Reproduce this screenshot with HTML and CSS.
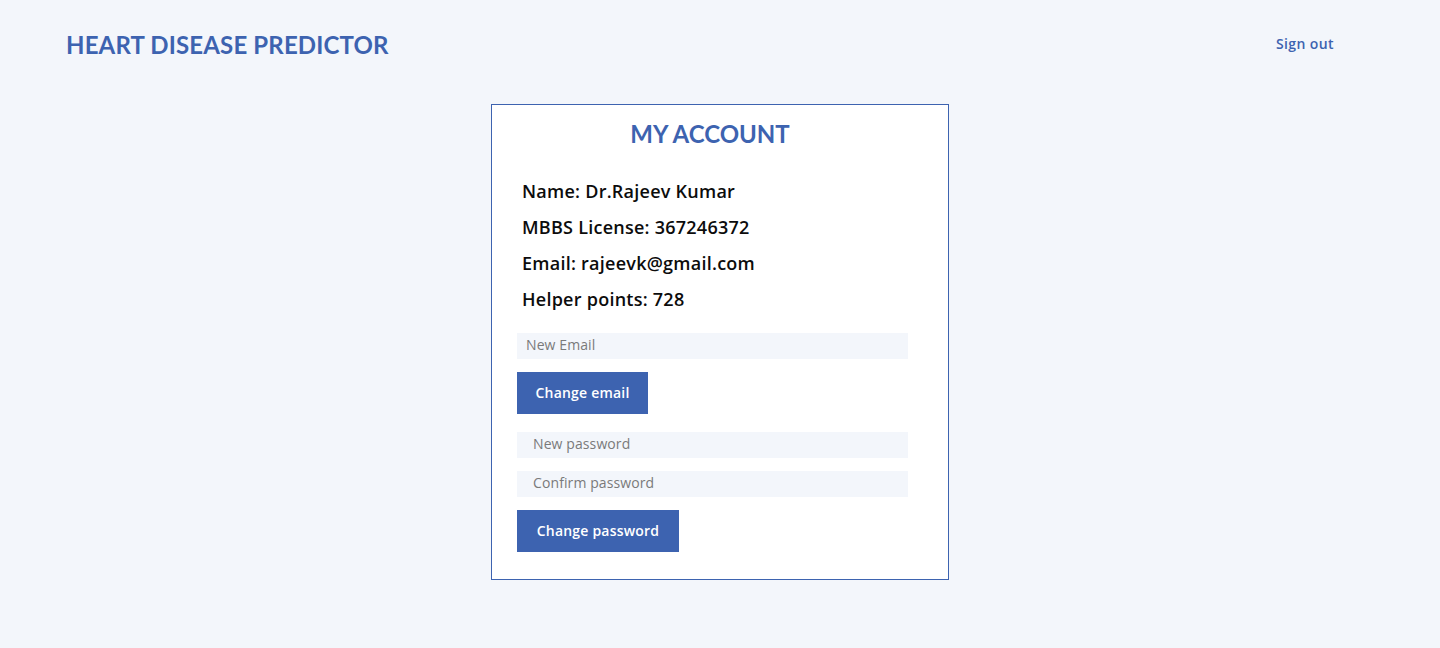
FILE: index.html
```html
<!DOCTYPE html>
<html>
<head>
<meta charset="utf-8">
<link rel="stylesheet" href="styles.css">
</head>
<body>
<header class="topbar">
  <div class="brand">HEART DISEASE PREDICTOR</div>
  <a class="signout" href="#">Sign out</a>
</header>
<main class="main">
  <section class="card">
    <h1 class="card-title">MY ACCOUNT</h1>
    <div class="info">
      <p>Name: Dr.Rajeev Kumar</p>
      <p>MBBS License: 367246372</p>
      <p>Email: rajeevk@gmail.com</p>
      <p>Helper points: 728</p>
    </div>
    <form class="form">
      <input class="field field-email" type="text" placeholder="New Email">
      <button class="btn btn-email" type="button">Change email</button>
      <input class="field field-pw" type="password" placeholder="New password">
      <input class="field field-pw field-confirm" type="password" placeholder="Confirm password">
      <button class="btn btn-pw" type="button">Change password</button>
    </form>
  </section>
</main>
</body>
</html>
```
FILE: styles.css
```css
* { box-sizing: border-box; }
html, body { margin: 0; padding: 0; }
body {
  background: #f3f6fb;
  font-family: "Open Sans", "Lato", sans-serif;
  width: 1440px;
  height: 648px;
  overflow: hidden;
}
.topbar {
  display: flex;
  justify-content: space-between;
  align-items: center;
  height: 88px;
  padding: 0 106px 0 66px;
}
.brand {
  font-family: "Lato", sans-serif;
  color: #3d63b0;
  font-weight: 700;
  font-size: 24px;
  letter-spacing: 0.15px;
}
.signout {
  color: #3d63b0;
  font-weight: 600;
  font-size: 14px;
  letter-spacing: 0.4px;
  text-decoration: none;
  padding-bottom: 2px;
}
.main {
  display: flex;
  justify-content: center;
  padding-top: 16px;
}
.card {
  width: 458px;
  height: 476px;
  background: #fff;
  border: 1px solid #3d63b0;
  padding: 0 40px 0 25px;
}
.card-title {
  font-family: "Lato", sans-serif;
  margin: 0 0 0 -5px;
  padding-top: 15px;
  text-align: center;
  color: #3d63b0;
  font-size: 24px;
  font-weight: 700;
  line-height: 28px;
}
.info {
  padding: 32px 0 0 5px;
}
.info p {
  margin: 0 0 14px;
  font-size: 18px;
  line-height: 22px;
  font-weight: 600;
  letter-spacing: 0.25px;
  color: #0c0c0c;
}
.form {
  display: flex;
  flex-direction: column;
  align-items: flex-start;
  padding-top: 9px;
}
.field {
  width: 391px;
  height: 26px;
  border: none;
  background: #f3f6fb;
  font-family: "Open Sans", sans-serif;
  font-size: 14px;
  letter-spacing: 0.1px;
  padding: 0 0 4px 9px;
  outline: none;
}
.field::placeholder { color: #7a7a7a; }
.field-pw { padding-left: 16px; margin-top: 18px; }
.field-confirm { margin-top: 13px; }
.btn {
  background: #3d63b0;
  color: #fff;
  border: none;
  font-family: "Open Sans", sans-serif;
  font-weight: 600;
  font-size: 14px;
  letter-spacing: 0.2px;
  height: 42px;
  padding: 0 0 2px;
  margin-top: 13px;
}
.btn-email { width: 131px; }
.btn-pw { width: 162px; }
```
